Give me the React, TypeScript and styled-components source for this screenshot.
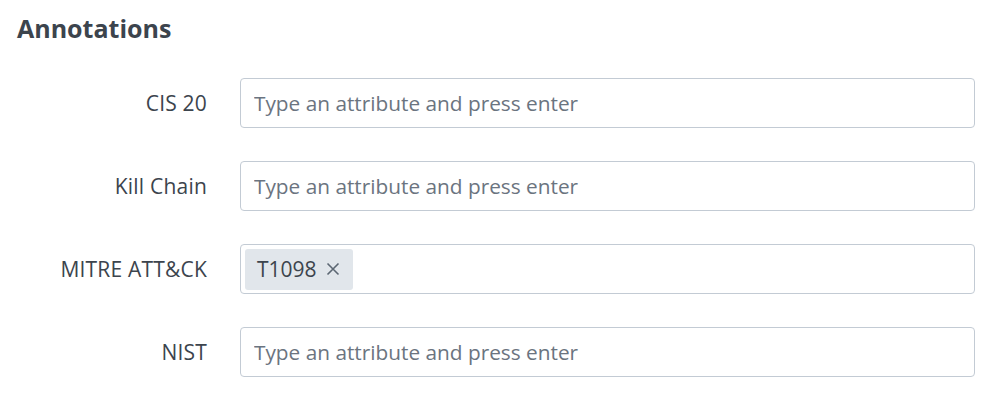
import React from "react";
import styled, { createGlobalStyle } from "styled-components";

const Global = createGlobalStyle`
  html, body { margin: 0; padding: 0; background: #ffffff; }
  body { font-family: "Open Sans", Lato, sans-serif; color: #3c444d; }
`;

const Page = styled.div`
  padding: 12px 30px 20px 17px;
`;

const Heading = styled.h2`
  margin: 0 0 34px 0;
  font-size: 25px;
  font-weight: 700;
  line-height: 32px;
  color: #3c444d;
`;

const Form = styled.div`
  display: flex;
  flex-direction: column;
  gap: 33px;
`;

const Row = styled.div`
  display: grid;
  grid-template-columns: 190px 1fr;
  column-gap: 33px;
  align-items: center;
`;

const Label = styled.label`
  text-align: right;
  font-size: 21px;
  letter-spacing: 0.2px;
  color: #3c444d;
`;

const Box = styled.div`
  box-sizing: border-box;
  height: 50px;
  border: 1px solid #c3cbd4;
  border-radius: 4px;
  display: flex;
  align-items: center;
  padding: 0 4px;
  gap: 6px;
`;

const Input = styled.input`
  flex: 1;
  min-width: 0;
  border: none;
  outline: none;
  font-family: inherit;
  font-size: 20.8px;
  color: #3c444d;
  padding: 0 9px;
  background: transparent;
  &::placeholder { color: #6b7480; }
`;

const Tag = styled.span`
  display: inline-flex;
  align-items: center;
  gap: 9px;
  height: 41px;
  padding: 0 13px 0 12px;
  background: #e1e6eb;
  border-radius: 3px;
  font-size: 21px;
  color: #3c444d;
`;

const Close = styled.svg`
  width: 14px;
  height: 14px;
  stroke: #5c6773;
  stroke-width: 1.6;
`;

type Field = { label: string; tags?: string[] };
const fields: Field[] = [
  { label: "CIS 20" },
  { label: "Kill Chain" },
  { label: "MITRE ATT&CK", tags: ["T1098"] },
  { label: "NIST" },
];

export default function App() {
  return (
    <>
      <Global />
      <Page>
        <Heading>Annotations</Heading>
        <Form>
          {fields.map((f) => (
            <Row key={f.label}>
              <Label>{f.label}</Label>
              <Box>
                {f.tags?.map((t) => (
                  <Tag key={t}>
                    {t}
                    <Close viewBox="0 0 14 14">
                      <path d="M1.5 1.5 L12.5 12.5 M12.5 1.5 L1.5 12.5" />
                    </Close>
                  </Tag>
                ))}
                <Input placeholder={f.tags ? "" : "Type an attribute and press enter"} />
              </Box>
            </Row>
          ))}
        </Form>
      </Page>
    </>
  );
}
